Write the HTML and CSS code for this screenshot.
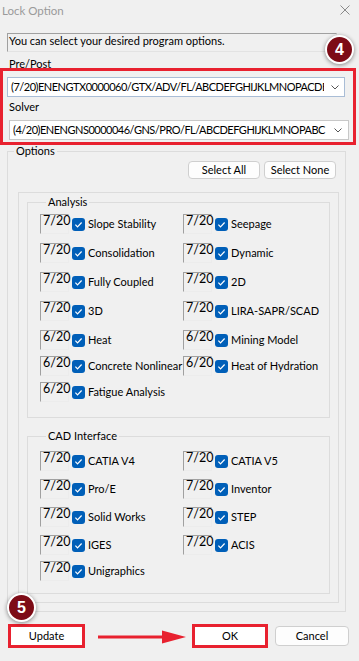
FILE: index.html
```html
<!DOCTYPE html>
<html lang="en">
<head>
  <meta charset="UTF-8" />
  <meta name="viewport" content="width=device-width, initial-scale=1.0" />
  <title>Lock Option</title>
  <link rel="stylesheet" href="styles.css">
</head>
<body>
  <div class="dialog">
    <div class="titlebar">
      <span class="title">Lock Option</span>
      <svg class="close" width="10" height="10" viewBox="0 0 10 10"><path d="M0.5 0.5L9.5 9.5M9.5 0.5L0.5 9.5" stroke="#8a8a8a" stroke-width="1" fill="none"/></svg>
    </div>

    <div class="info">You can select your desired program options.</div>

    <div class="field-label pre">Pre/Post</div>
    <div class="highlight">
      <div class="combo combo-pre">
        <span class="combo-text">(7/20)ENENGTX0000060/GTX/ADV/FL/ABCDEFGHIJKLMNOPACDEF</span>
        <svg class="chevron" width="8" height="5" viewBox="0 0 8 5"><path d="M0.5 0.5L4 4L7.5 0.5" stroke="#555" stroke-width="1" fill="none"/></svg>
      </div>
      <div class="field-label solver">Solver</div>
      <div class="combo combo-solver">
        <span class="combo-text">(4/20)ENENGNS0000046/GNS/PRO/FL/ABCDEFGHIJKLMNOPABC</span>
        <svg class="chevron" width="8" height="5" viewBox="0 0 8 5"><path d="M0.5 0.5L4 4L7.5 0.5" stroke="#555" stroke-width="1" fill="none"/></svg>
      </div>
    </div>

    <!-- Options -->
    <fieldset class="group options">
      <legend>Options</legend>
      <div class="select-bar">
        <button class="btn small">Select All</button>
        <button class="btn small">Select None</button>
      </div>

      <div class="panel">
        <fieldset class="group analysis">
          <legend>Analysis</legend>
          <div class="row">
            <div class="opt"><span class="count">7/20</span><span class="check"><svg width="13" height="13" viewBox="0 0 13 13"><path d="M3.4 6.7L5.5 8.8L9.6 4.5" stroke="#fff" stroke-width="1.2" fill="none"/></svg></span><span class="name">Slope Stability</span></div>
            <div class="opt"><span class="count">7/20</span><span class="check"><svg width="13" height="13" viewBox="0 0 13 13"><path d="M3.4 6.7L5.5 8.8L9.6 4.5" stroke="#fff" stroke-width="1.2" fill="none"/></svg></span><span class="name">Seepage</span></div>
          </div>
          <div class="row">
            <div class="opt"><span class="count">7/20</span><span class="check"><svg width="13" height="13" viewBox="0 0 13 13"><path d="M3.4 6.7L5.5 8.8L9.6 4.5" stroke="#fff" stroke-width="1.2" fill="none"/></svg></span><span class="name">Consolidation</span></div>
            <div class="opt"><span class="count">7/20</span><span class="check"><svg width="13" height="13" viewBox="0 0 13 13"><path d="M3.4 6.7L5.5 8.8L9.6 4.5" stroke="#fff" stroke-width="1.2" fill="none"/></svg></span><span class="name">Dynamic</span></div>
          </div>
          <div class="row">
            <div class="opt"><span class="count">7/20</span><span class="check"><svg width="13" height="13" viewBox="0 0 13 13"><path d="M3.4 6.7L5.5 8.8L9.6 4.5" stroke="#fff" stroke-width="1.2" fill="none"/></svg></span><span class="name">Fully Coupled</span></div>
            <div class="opt"><span class="count">7/20</span><span class="check"><svg width="13" height="13" viewBox="0 0 13 13"><path d="M3.4 6.7L5.5 8.8L9.6 4.5" stroke="#fff" stroke-width="1.2" fill="none"/></svg></span><span class="name">2D</span></div>
          </div>
          <div class="row">
            <div class="opt"><span class="count">7/20</span><span class="check"><svg width="13" height="13" viewBox="0 0 13 13"><path d="M3.4 6.7L5.5 8.8L9.6 4.5" stroke="#fff" stroke-width="1.2" fill="none"/></svg></span><span class="name">3D</span></div>
            <div class="opt"><span class="count">7/20</span><span class="check"><svg width="13" height="13" viewBox="0 0 13 13"><path d="M3.4 6.7L5.5 8.8L9.6 4.5" stroke="#fff" stroke-width="1.2" fill="none"/></svg></span><span class="name">LIRA-SAPR/SCAD</span></div>
          </div>
          <div class="row">
            <div class="opt"><span class="count">6/20</span><span class="check"><svg width="13" height="13" viewBox="0 0 13 13"><path d="M3.4 6.7L5.5 8.8L9.6 4.5" stroke="#fff" stroke-width="1.2" fill="none"/></svg></span><span class="name">Heat</span></div>
            <div class="opt"><span class="count">6/20</span><span class="check"><svg width="13" height="13" viewBox="0 0 13 13"><path d="M3.4 6.7L5.5 8.8L9.6 4.5" stroke="#fff" stroke-width="1.2" fill="none"/></svg></span><span class="name">Mining Model</span></div>
          </div>
          <div class="row tight">
            <div class="opt"><span class="count">6/20</span><span class="check"><svg width="13" height="13" viewBox="0 0 13 13"><path d="M3.4 6.7L5.5 8.8L9.6 4.5" stroke="#fff" stroke-width="1.2" fill="none"/></svg></span><span class="name">Concrete Nonlinear</span></div>
            <div class="opt"><span class="count">6/20</span><span class="check"><svg width="13" height="13" viewBox="0 0 13 13"><path d="M3.4 6.7L5.5 8.8L9.6 4.5" stroke="#fff" stroke-width="1.2" fill="none"/></svg></span><span class="name">Heat of Hydration</span></div>
          </div>
          <div class="row tight">
            <div class="opt"><span class="count">6/20</span><span class="check"><svg width="13" height="13" viewBox="0 0 13 13"><path d="M3.4 6.7L5.5 8.8L9.6 4.5" stroke="#fff" stroke-width="1.2" fill="none"/></svg></span><span class="name">Fatigue Analysis</span></div>
          </div>
        </fieldset>

        <fieldset class="group cad">
          <legend>CAD Interface</legend>
          <div class="row">
            <div class="opt"><span class="count">7/20</span><span class="check"><svg width="13" height="13" viewBox="0 0 13 13"><path d="M3.4 6.7L5.5 8.8L9.6 4.5" stroke="#fff" stroke-width="1.2" fill="none"/></svg></span><span class="name">CATIA V4</span></div>
            <div class="opt"><span class="count">7/20</span><span class="check"><svg width="13" height="13" viewBox="0 0 13 13"><path d="M3.4 6.7L5.5 8.8L9.6 4.5" stroke="#fff" stroke-width="1.2" fill="none"/></svg></span><span class="name">CATIA V5</span></div>
          </div>
          <div class="row">
            <div class="opt"><span class="count">7/20</span><span class="check"><svg width="13" height="13" viewBox="0 0 13 13"><path d="M3.4 6.7L5.5 8.8L9.6 4.5" stroke="#fff" stroke-width="1.2" fill="none"/></svg></span><span class="name">Pro/E</span></div>
            <div class="opt"><span class="count">7/20</span><span class="check"><svg width="13" height="13" viewBox="0 0 13 13"><path d="M3.4 6.7L5.5 8.8L9.6 4.5" stroke="#fff" stroke-width="1.2" fill="none"/></svg></span><span class="name">Inventor</span></div>
          </div>
          <div class="row">
            <div class="opt"><span class="count">7/20</span><span class="check"><svg width="13" height="13" viewBox="0 0 13 13"><path d="M3.4 6.7L5.5 8.8L9.6 4.5" stroke="#fff" stroke-width="1.2" fill="none"/></svg></span><span class="name">Solid Works</span></div>
            <div class="opt"><span class="count">7/20</span><span class="check"><svg width="13" height="13" viewBox="0 0 13 13"><path d="M3.4 6.7L5.5 8.8L9.6 4.5" stroke="#fff" stroke-width="1.2" fill="none"/></svg></span><span class="name">STEP</span></div>
          </div>
          <div class="row">
            <div class="opt"><span class="count">7/20</span><span class="check"><svg width="13" height="13" viewBox="0 0 13 13"><path d="M3.4 6.7L5.5 8.8L9.6 4.5" stroke="#fff" stroke-width="1.2" fill="none"/></svg></span><span class="name">IGES</span></div>
            <div class="opt"><span class="count">7/20</span><span class="check"><svg width="13" height="13" viewBox="0 0 13 13"><path d="M3.4 6.7L5.5 8.8L9.6 4.5" stroke="#fff" stroke-width="1.2" fill="none"/></svg></span><span class="name">ACIS</span></div>
          </div>
          <div class="row tight">
            <div class="opt"><span class="count">7/20</span><span class="check"><svg width="13" height="13" viewBox="0 0 13 13"><path d="M3.4 6.7L5.5 8.8L9.6 4.5" stroke="#fff" stroke-width="1.2" fill="none"/></svg></span><span class="name">Unigraphics</span></div>
          </div>
        </fieldset>
      </div>
    </fieldset>

    <!-- Bottom buttons -->
    <div class="footer">
      <button class="btn marked update">Update</button>
      <svg class="arrow" width="88" height="14" viewBox="0 0 88 14"><path d="M0 7H66" stroke="#e8212f" stroke-width="3"/><path d="M64 0.5L88 7L64 13.5Z" fill="#e8212f"/></svg>
      <button class="btn marked ok">OK</button>
      <button class="btn cancel">Cancel</button>
    </div>

    <span class="badge badge-4">4</span>
    <span class="badge badge-5">5</span>
  </div>
</body>
</html>
```

FILE: styles.css
```css
* {
  box-sizing: border-box;
}
body {
  margin: 0;
  background: #f0f0f0;
  font-family: 'Lato', 'Liberation Sans', sans-serif;
  font-size: 11px;
  color: #000;
}
.dialog {
  position: relative;
  width: 359px;
  height: 661px;
  overflow: hidden;
}
.titlebar {
  display: flex;
  justify-content: space-between;
  align-items: center;
  height: 20px;
  padding: 0 9px 0 2px;
}
.title {
  color: #9a9a9a;
  font-size: 11.5px;
}
.info {
  margin: 13px 0 0 7px;
  width: 330px;
  height: 19px;
  padding-left: 1px;
  line-height: 14px;
  border-top: 1px solid #a0a0a0;
  border-left: 1px solid #a0a0a0;
  border-right: 1px solid #e3e3e3;
  border-bottom: 1px solid #e3e3e3;
}
.field-label {
  line-height: 12px;
}
.field-label.pre {
  margin: 6px 0 -2px 9px;
}
.field-label.solver {
  margin: 4px 0 0 6px;
}
.highlight {
  width: 356px;
  border: 3px solid #e8212f;
  padding: 6px 0 2px 0;
}
.combo {
  display: flex;
  align-items: center;
  height: 20px;
  background: #fff;
  border: 1px solid #c8c8c8;
  padding: 0 5px 0 3px;
}
.combo-pre {
  margin-left: 4px;
  width: 338px;
  border-color: #a9bdd6;
}
.combo-solver {
  margin: 7px 0 0 6px;
  width: 340px;
  padding-right: 6px;
}
.combo-text {
  flex: 1;
  overflow: hidden;
  white-space: nowrap;
  line-height: 14px;
  letter-spacing: -0.5px;
  margin-right: 7px;
}
.chevron {
  flex-shrink: 0;
}
/* Group boxes */
.group {
  margin: 0;
  padding: 0;
  border: 1px solid #dcdcdc;
  min-width: 0;
}
.group legend {
  margin-left: 6px;
  padding: 0 2px;
  line-height: 12px;
}
.options {
  margin-left: 7px;
  width: 339px;
}
.select-bar {
  display: flex;
  justify-content: flex-end;
  gap: 4px;
  margin-top: 4px;
  padding-right: 9px;
}
.btn {
  font-family: inherit;
  font-size: 11px;
  color: #000;
  background: #fdfdfd;
  border: 1px solid #cfcfcf;
  border-radius: 4px;
  padding: 0;
  line-height: 14px;
}
.btn.small {
  width: 72px;
  height: 18px;
}
.panel {
  margin: 13px 6px 8px 10px;
  border: 1px solid #dcdcdc;
  padding: 3px 8px 8px 8px;
}
.analysis {
  padding: 6px 0 15px 12px;
}
.cad {
  margin-top: 12px;
  padding: 9px 0 12px 12px;
}
.row {
  display: flex;
  height: 20px;
}
.row + .row {
  margin-top: 9px;
}
.cad .row + .row {
  margin-top: 8px;
}
.row.tight,
.cad .row.tight {
  margin-top: 6px;
}
.opt {
  display: flex;
  align-items: center;
  width: 143px;
  height: 20px;
}
.count {
  align-self: stretch;
  width: 29px;
  padding-left: 2px;
  line-height: 12px;
  font-size: 12.5px;
  border-top: 1px solid #a0a0a0;
  border-left: 1px solid #a0a0a0;
  border-right: 1px solid #ececec;
  border-bottom: 1px solid #ececec;
}
.check {
  display: flex;
  width: 13px;
  height: 13px;
  margin: 0 3px;
  background: #005fb8;
  border-radius: 3px;
}
.name {
  line-height: 14px;
  white-space: nowrap;
}
/* Footer */
.footer {
  display: flex;
  align-items: center;
  height: 24px;
  margin-top: 12px;
  padding-left: 8px;
}
.btn.marked {
  height: 24px;
  background: #fff;
  border: 3px solid #e8212f;
  border-radius: 0;
}
.update {
  width: 77px;
}
.arrow {
  margin: 1px 0 0 13px;
}
.ok {
  width: 76px;
  margin-left: 6px;
}
.cancel {
  width: 74px;
  height: 20px;
  margin-left: 7px;
}
/* Step badges */
.badge {
  position: absolute;
  width: 29px;
  height: 29px;
  border-radius: 50%;
  background: #7d0b16;
  border: 2px solid #fff;
  box-shadow: 0 1px 4px rgba(0, 0, 0, 0.45);
  color: #fff;
  font-family: 'Liberation Sans', sans-serif;
  font-weight: bold;
  font-size: 16px;
  line-height: 25px;
  text-align: center;
}
.badge-4 {
  left: 325px;
  top: 35px;
}
.badge-5 {
  left: 7px;
  top: 593px;
}
```
